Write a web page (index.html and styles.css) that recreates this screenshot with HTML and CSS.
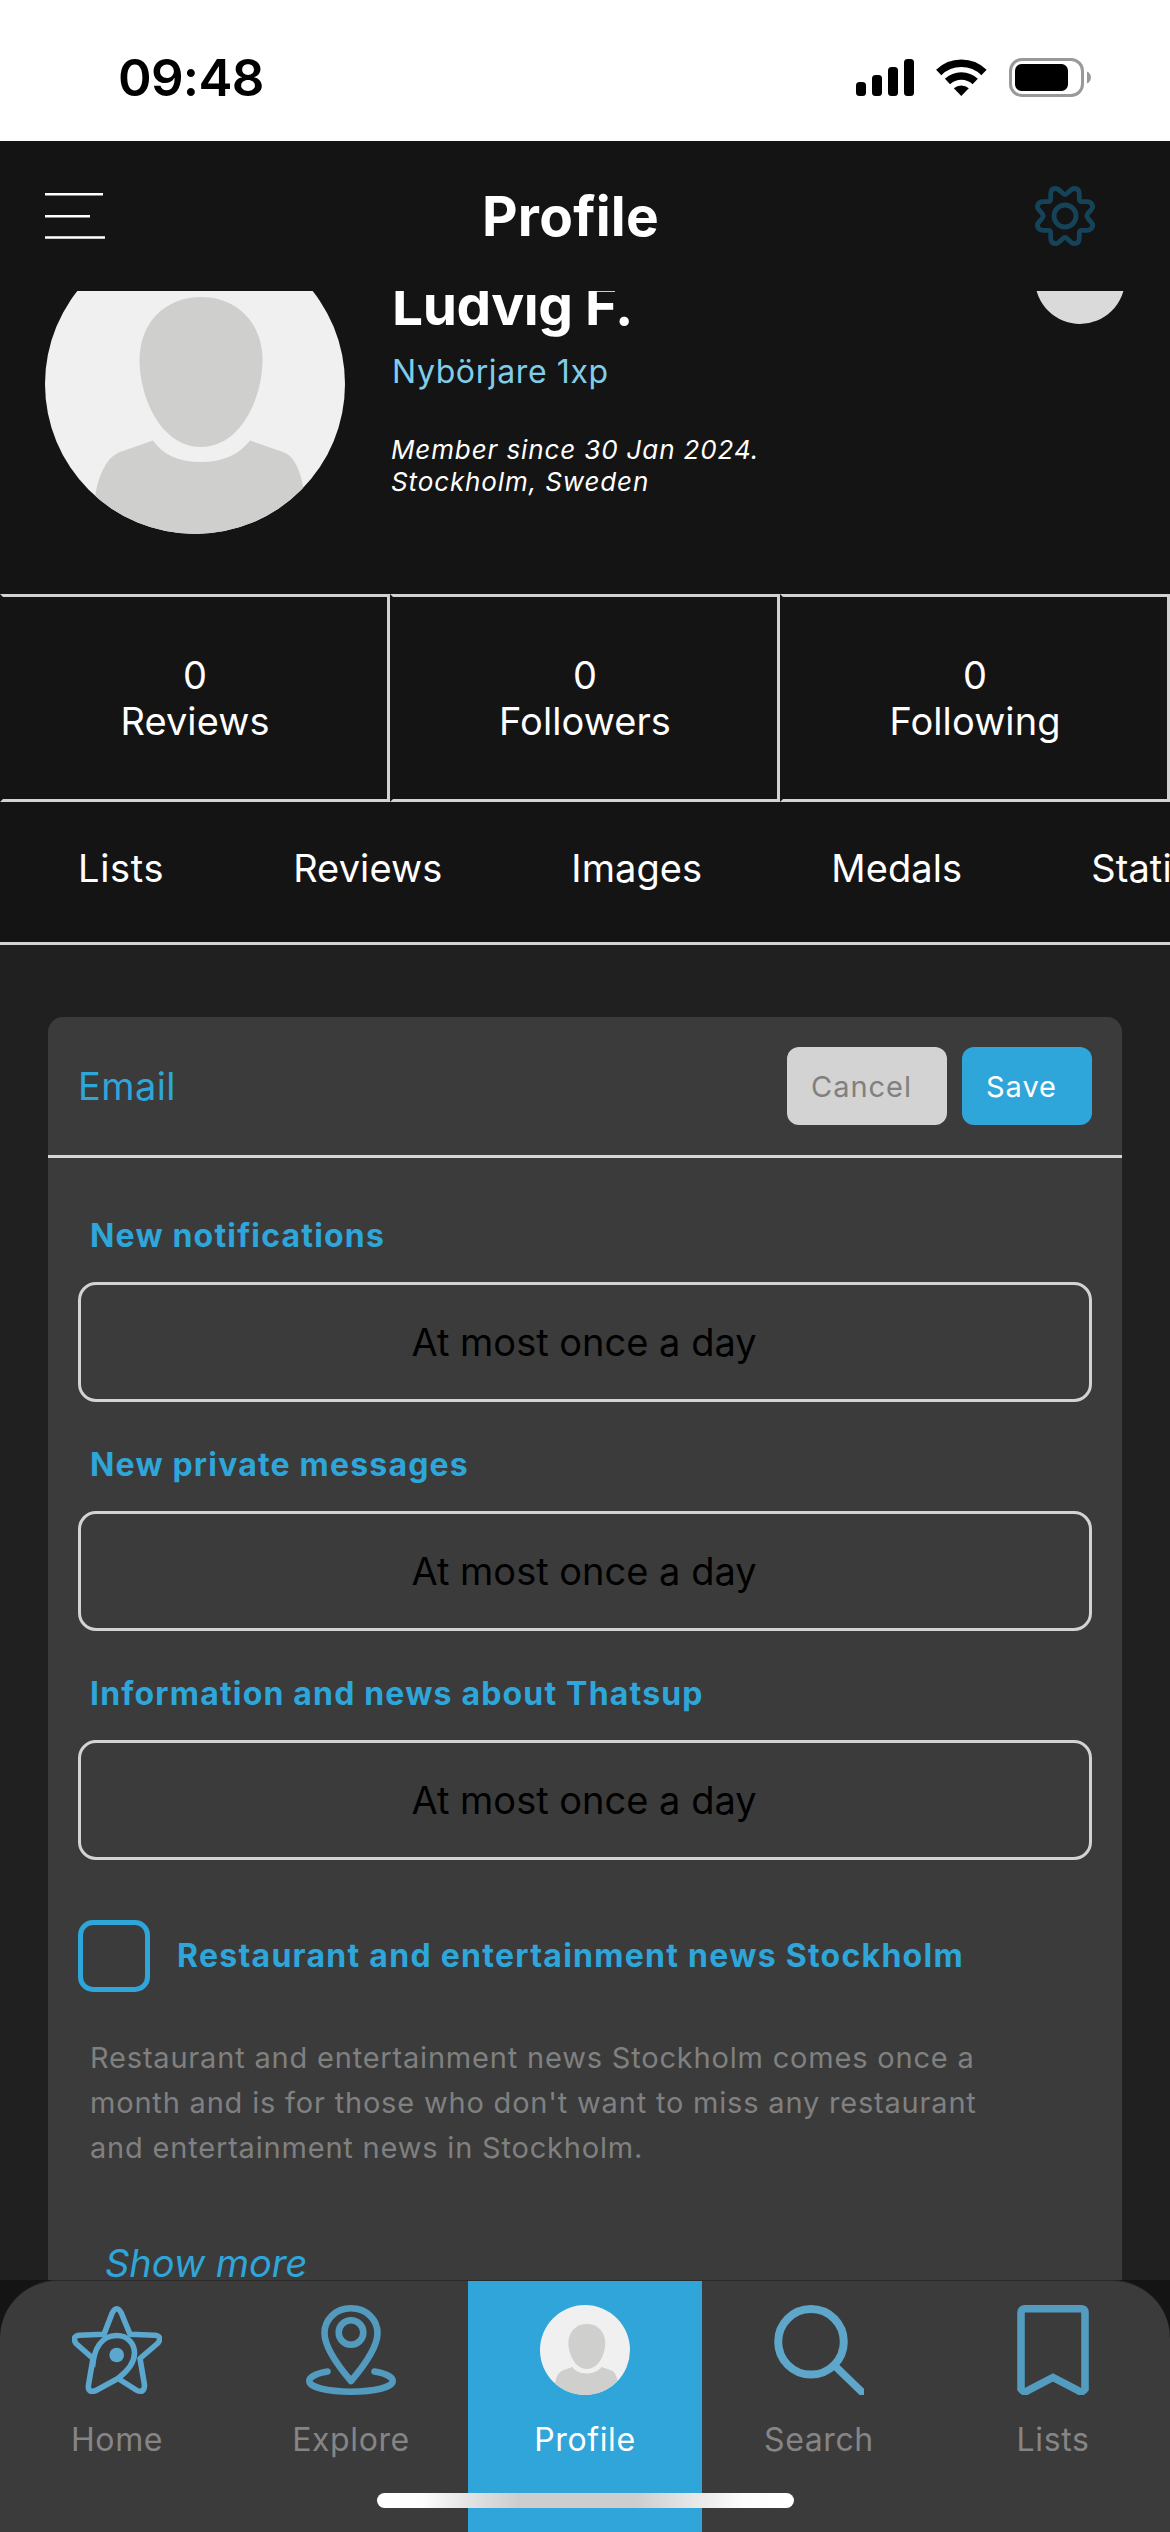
FILE: index.html
```html
<!DOCTYPE html>
<html lang="en">
<head>
<meta charset="utf-8">
<title>Profile</title>
<link rel="stylesheet" href="styles.css">
</head>
<body>
<svg class="defs" aria-hidden="true">
  <symbol id="avatar" viewBox="0 0 300 300">
    <rect width="300" height="300" fill="#f0f0f0"/>
    <path fill="#cfcfcd" d="M156 63C191 63 217.500 88 217.500 126C217.500 162 197 213 156 213C115 213 94.500 162 94.500 126C94.500 88 121 63 156 63Z"/>
    <path fill="#cfcfcd" d="M48 300C48 268 51 247 60 232C64 225 68 221 75 218L108 206.500C118 221 134 228 156 228C177 228 194 221 205 206.500L238 218C246 221 250 227 253.500 236C259 250 262 272 262 300Z"/>
  </symbol>
</svg>
<div class="screen">
  <div class="status">
    <span class="time">09:48</span>
    <svg class="status-icons" viewBox="0 0 270 80">
      <rect x="16" y="42" width="10" height="14" rx="3.500"/>
      <rect x="32" y="35" width="10" height="21" rx="3.500"/>
      <rect x="48" y="27" width="10" height="29" rx="3.500"/>
      <rect x="64" y="19" width="10" height="37" rx="3.500"/>
      <path d="M98.700 32.500A32.500 32.500 0 0 1 144 32.500" fill="none" stroke="#000" stroke-width="7.500"/>
      <path d="M107.500 41.500A20 20 0 0 1 135.200 41.500" fill="none" stroke="#000" stroke-width="7.500"/>
      <path d="M121.300 56L113.800 48.200A11.500 11.500 0 0 1 128.800 48.200Z"/>
      <rect x="170.500" y="19.500" width="72" height="36" rx="11.500" fill="none" stroke="#999" stroke-width="3"/>
      <rect x="175" y="24" width="53" height="27" rx="6.500"/>
      <path d="M247 31.500C252.300 33.500 252.300 41.500 247 43.500Z" fill="#999"/>
    </svg>
  </div>
  <header class="topbar">
    <svg class="menu" viewBox="0 0 60 46">
      <path d="M0 1.200H58M0 23.200H45M0 44.500H60" stroke="#fff" stroke-width="2.400"/>
    </svg>
    <h1 class="title">Profile</h1>
    <svg class="gear" viewBox="0 0 60 60">
      <g fill="none" stroke="#15445a" stroke-width="4.800">
        <path id="q" d="M30 8.500C33 8.500 35 2.500 39.400 2.500C43 2.500 44.300 5 44.300 8V13Q44.300 15.700 47 15.700H52C57.500 15.900 59 21 56 24C53 27 51.900 28.500 51.900 30"/>
        <use href="#q" transform="matrix(-1 0 0 1 60 0)"/>
        <use href="#q" transform="matrix(1 0 0 -1 0 60)"/>
        <use href="#q" transform="matrix(-1 0 0 -1 60 60)"/>
        <circle cx="30" cy="30" r="11"/>
      </g>
    </svg>
  </header>
  <main class="content">
    <section class="profile">
      <svg class="photo"><use href="#avatar"/></svg>
      <div class="info">
        <h2 class="name">Ludvig F.</h2>
        <p class="level">Nybörjare 1xp</p>
        <p class="meta">Member since 30 Jan 2024.<br>Stockholm, Sweden</p>
      </div>
      <div class="badge"></div>
    </section>
    <section class="stats">
      <div class="stat"><span>0</span><span>Reviews</span></div>
      <div class="stat"><span>0</span><span>Followers</span></div>
      <div class="stat"><span>0</span><span>Following</span></div>
    </section>
    <nav class="tabs">
      <span class="first">Lists</span><span>Reviews</span><span>Images</span><span>Medals</span><span>Statistics</span>
    </nav>
    <section class="card">
      <div class="card-head">
        <h3 class="card-title">Email</h3>
        <button class="btn cancel">Cancel</button>
        <button class="btn save">Save</button>
      </div>
      <div class="card-body">
        <div class="field"><div class="label">New notifications</div><div class="select">At most once a day</div></div>
        <div class="field"><div class="label">New private messages</div><div class="select">At most once a day</div></div>
        <div class="field"><div class="label">Information and news about Thatsup</div><div class="select">At most once a day</div></div>
        <div class="check"><span class="box"></span><span class="check-label">Restaurant and entertainment news Stockholm</span></div>
        <p class="desc">Restaurant and entertainment news Stockholm comes once a<br>month and is for those who don't want to miss any restaurant<br>and entertainment news in Stockholm.</p>
        <div class="more">Show more</div>
      </div>
    </section>
  </main>
  <div class="dock">
    <nav class="bar">
      <div class="item">
        <svg class="icon" viewBox="0 0 90 90">
          <g fill="none" stroke="#5ba7cd" stroke-width="5.600" stroke-linejoin="round">
            <path d="M32 29.300L40 8.500Q44.700 -1 49.500 8.500L58 29.300L83 30.300Q90.500 31.500 86 38L68 53.500L72.500 80Q72.500 88.500 65 85.500L46 73.500L24 85.500Q15.500 88.500 16.500 80L21 53.500L4 38.500Q-.5 31.500 7 30.300Z"/>
            <path d="M20.500 62C22 44 29 30.500 44.700 30.500C56 30.500 62.500 39 62.500 48C62.500 57 57 65 46 73.500"/>
          </g>
          <circle cx="44.700" cy="50" r="7.300" fill="#5ba7cd"/>
        </svg>
        <span>Home</span>
      </div>
      <div class="item">
        <svg class="icon" viewBox="0 0 90 90">
          <g fill="none" stroke="#539abf" stroke-width="6.600" stroke-linecap="round" stroke-linejoin="round">
            <path d="M45 3.300C29 3.300 18.500 15 18.500 28C18.500 42 33 62 45 76C57 62 71.500 42 71.500 28C71.500 15 61 3.300 45 3.300Z"/>
            <circle cx="45" cy="27.500" r="12.300"/>
            <path d="M21.500 66.500C10 68.500 3.300 72 3.300 76C3.300 82.500 22 86.700 45 86.700C68 86.700 86.700 82.500 86.700 76C86.700 72 80 68.500 68.500 66.500"/>
          </g>
        </svg>
        <span>Explore</span>
      </div>
      <div class="item active">
        <svg class="icon mini" viewBox="0 0 90 90"><use href="#avatar" width="90" height="90"/></svg>
        <span>Profile</span>
      </div>
      <div class="item">
        <svg class="icon" viewBox="0 0 90 90">
          <g fill="none" stroke="#5ea6ca" stroke-width="8">
            <circle cx="37" cy="36.800" r="32.800"/>
            <path d="M60 60L92 91" stroke-width="7.500"/>
          </g>
        </svg>
        <span>Search</span>
      </div>
      <div class="item">
        <svg class="icon" viewBox="0 0 90 90">
          <path d="M17 3.800H73Q77 3.800 77 8V84Q74 88.500 70 85.500L45 72.500L20 85.500Q16 88.500 13 84V8Q13 3.800 17 3.800Z" fill="none" stroke="#549bc0" stroke-width="7.600"/>
        </svg>
        <span>Lists</span>
      </div>
    </nav>
    <div class="home-indicator"></div>
  </div>
</div>
</body>
</html>
```
FILE: styles.css
```css
* { box-sizing: border-box; }
body { margin: 0; font-family: Inter, "Liberation Sans", sans-serif; color: #fff; background: #141414; }
h1, h2, h3, p { margin: 0; font-weight: 400; }
.defs { display: none; }
.screen { width: 1170px; height: 2532px; display: flex; flex-direction: column; overflow: hidden; }

.status { height: 141px; flex: none; background: #fff; color: #000; display: flex; justify-content: space-between; padding: 40px 60px 0 118px; }
.time { font-size: 51px; font-weight: 600; line-height: 60px; letter-spacing: -.7px; padding-top: 8px; }
.status-icons { width: 270px; height: 80px; }

.topbar { height: 150px; flex: none; background: #141414; display: flex; align-items: center; justify-content: space-between; padding: 0 75px 0 45px; }
.menu { width: 60px; height: 46px; }
.title { font-size: 55px; font-weight: 700; line-height: 70px; letter-spacing: .24px; margin-left: 1px; }
.gear { width: 60px; height: 60px; }

.content { flex: 1; min-height: 0; overflow: hidden; background: #202020; }
.profile { height: 360px; margin-top: -57px; background: #141414; display: flex; padding: 0 45px; }
.photo { width: 300px; height: 300px; border-radius: 50%; flex: none; }
.info { flex: 1; padding: 41px 0 0 47px; }
.name { font-size: 55px; font-weight: 700; line-height: 60px; letter-spacing: -.45px; }
.level { margin-top: 17px; font-size: 32px; line-height: 40px; letter-spacing: .62px; color: #80cdea; }
.meta { margin-top: 42px; margin-left: -1px; font-size: 26px; font-style: italic; line-height: 32px; letter-spacing: .88px; }
.badge { width: 90px; height: 90px; border-radius: 50%; background: #dadada; }

.stats { display: grid; grid-template-columns: repeat(3, 1fr); height: 208px; background: #141414; }
.stat { display: flex; flex-direction: column; align-items: center; justify-content: center; font-size: 38px; line-height: 46px; letter-spacing: .1px; border: 3px solid #d3d3d3; border-left-color: transparent; }

.tabs { height: 143px; display: flex; gap: 129px; padding: 43px 0 0 78px; background: #141414; border-bottom: 3px solid #d3d3d3; font-size: 38px; line-height: 46px; letter-spacing: .1px; overflow: hidden; white-space: nowrap; }
.tabs .first { letter-spacing: .65px; }

.card { margin: 72px 48px 0; background: #3b3b3b; border-radius: 15px 15px 0 0; height: 1300px; }
.card-head { height: 141px; border-bottom: 3px solid #d6d6d6; display: flex; align-items: center; gap: 15px; padding: 0 30px; }
.card-title { flex: 1; color: #2fa6d9; font-size: 38px; line-height: 46px; letter-spacing: .4px; }
.btn { height: 78px; border: 0; border-radius: 12px; font: 400 29px/40px Inter, "Liberation Sans", sans-serif; letter-spacing: .96px; text-align: left; padding: 1px 0 0 24px; }
.cancel { width: 160px; background: #d3d3d3; color: #808080; }
.save { width: 130px; background: #2fa6d9; color: #fff; }

.card-body { padding: 58px 30px 0; }
.field { margin-bottom: 43px; }
.label { padding-left: 12px; margin-bottom: 26px; color: #2fa6d9; font-size: 32px; font-weight: 700; line-height: 40px; letter-spacing: 1.18px; }
.select { height: 120px; border: 3px solid #d3d3d3; border-radius: 18px; color: #000; font-size: 38px; line-height: 114px; text-align: center; padding-right: 2px; }
.check { display: flex; align-items: center; gap: 27px; margin-top: 60px; }
.box { width: 72px; height: 72px; border: 5px solid #2fa6d9; border-radius: 15px; }
.check-label { color: #2fa6d9; font-size: 32px; font-weight: 700; line-height: 40px; letter-spacing: 1.27px; }
.desc { margin-top: 43px; padding-left: 12px; color: #808080; font-size: 29px; line-height: 45px; letter-spacing: .81px; white-space: nowrap; }
.more { margin-top: 70px; padding-left: 27px; color: #2fa6d9; font-size: 38px; font-style: italic; line-height: 46px; }

.dock { position: relative; height: 252px; flex: none; background: #141414; }
.bar { height: 252px; display: flex; background: #3b3b3b; border-top: 1px solid #2a2a2a; border-radius: 58px 58px 0 0; overflow: hidden; }
.item { flex: 1; display: flex; flex-direction: column; align-items: center; padding-top: 24px; gap: 25px; color: #858585; font-size: 32px; line-height: 40px; letter-spacing: .6px; }
.item.active { background: #30a5d9; color: #fff; }
.icon { width: 90px; height: 90px; flex: none; }
.mini { border-radius: 50%; }
.home-indicator { position: absolute; left: 377px; top: 213px; width: 417px; height: 15px; border-radius: 8px; background: linear-gradient(90deg, #fff 0, #fcfcfc 11%, #e3e3e3 22%, #cdcdcd 34%, #cdcdcd 62%, #e0e0e0 72%, #fcfcfc 88%, #fff 100%); }
```
